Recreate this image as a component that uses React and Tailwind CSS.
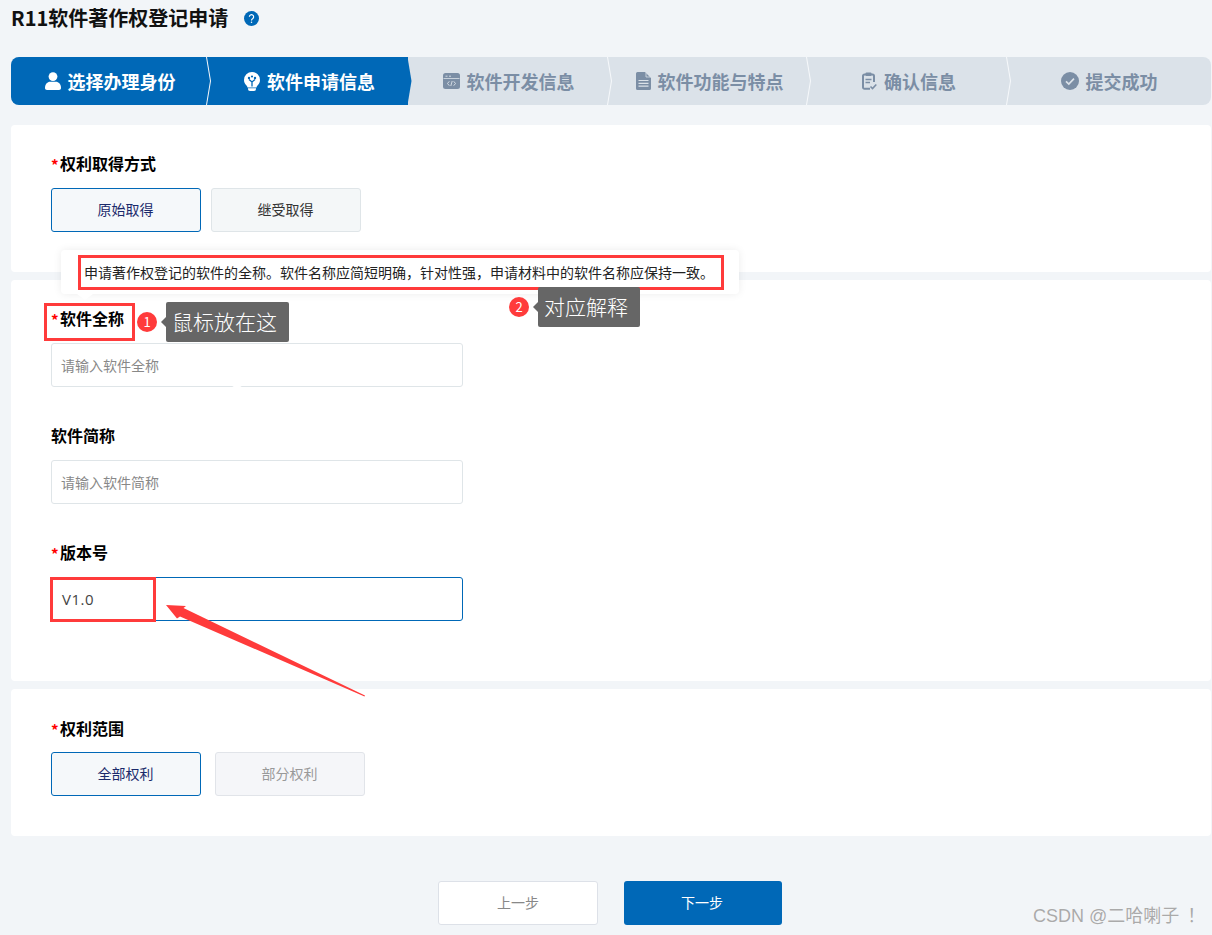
import React from 'react'

const FONT = "font-['Noto_Sans_CJK_SC','Noto_Sans',sans-serif]"

const UserIcon = () => (
  <svg viewBox="0 0 16 18" className="w-[16px] h-[18px]" fill="currentColor">
    <circle cx="8" cy="4.600" r="4.400" />
    <path d="M0 16c0-4 2.600-6.200 5-6.200h6c2.400 0 5 2.200 5 6.200 0 1.200-.8 2-2 2H2c-1.200 0-2-.8-2-2z" />
  </svg>
)

const BulbIcon = () => (
  <svg viewBox="0 0 16 19" className="w-[16px] h-[19px]" fill="currentColor">
    <path d="M8 0a8 8 0 0 0-8 8c0 2.400 1 4 2.300 5.300.8.8 1.200 1.500 1.200 2.200h9c0-.7.4-1.400 1.200-2.200C15 12 16 10.400 16 8a8 8 0 0 0-8-8z" />
    <path d="M4 16.300h8v.7a2 2 0 0 1-2 2H6a2 2 0 0 1-2-2z" />
    <circle cx="5" cy="6" r="1.200" fill="#0068b7" />
    <circle cx="11" cy="6" r="1.200" fill="#0068b7" />
    <circle cx="8" cy="4.500" r="1.100" fill="#0068b7" />
    <path d="M5 7.500 8 10l3-2.500M8 9.500v5" stroke="#0068b7" strokeWidth="1.300" fill="none" />
  </svg>
)

const CodeIcon = () => (
  <svg viewBox="0 0 17 16" className="w-[17px] h-[16px]">
    <rect width="17" height="16" rx="2.500" fill="currentColor" />
    <path d="M2.500 3.200h2M6 3.200h2" stroke="#dbe2e9" strokeWidth="0.900" />
    <path d="M0.500 5.500h16" stroke="#dbe2e9" strokeWidth="0.800" />
    <path d="M6.300 8.300 4.500 10.500l1.800 2.200M10.700 8.300l1.800 2.200-1.800 2.200M9.200 8l-1.400 5" stroke="#dbe2e9" strokeWidth="0.900" fill="none" />
  </svg>
)

const FileIcon = () => (
  <svg viewBox="0 0 15 18" className="w-[15px] h-[18px]">
    <path d="M1.500 0H9L15 6V16.500A1.500 1.500 0 0 1 13.500 18H1.500A1.500 1.500 0 0 1 0 16.500V1.500A1.500 1.500 0 0 1 1.500 0z" fill="currentColor" />
    <path d="M2.500 8.500h10M2.500 11.300h10M2.500 14.100h10" stroke="#dbe2e9" strokeWidth="1.200" />
    <path d="M10 0.500v4.500h4.500" fill="none" stroke="#dbe2e9" strokeWidth="0.800" />
  </svg>
)

const ClipboardIcon = () => (
  <svg viewBox="0 0 15 18" className="w-[15px] h-[18px]">
    <path
      d="M8 16.800H2.500A1.500 1.500 0 0 1 1 15.300V4A1.500 1.500 0 0 1 2.500 2.500h8A1.500 1.500 0 0 1 12 4v6"
      fill="none"
      stroke="currentColor"
      strokeWidth="2"
    />
    <rect x="3.500" y="0.500" width="6" height="3.500" rx="1" fill="currentColor" />
    <path d="M3.500 7.500h6M3.500 10.500h4.500" stroke="currentColor" strokeWidth="1.500" />
    <path d="M8.500 14.500l2 2 3.800-4" stroke="currentColor" strokeWidth="1.600" fill="none" />
  </svg>
)

const CheckIcon = () => (
  <svg viewBox="0 0 18 18" className="w-[18px] h-[18px]">
    <circle cx="9" cy="9" r="9" fill="currentColor" />
    <path d="M5 9.300l2.800 2.700L13 6.600" stroke="#dbe2e9" strokeWidth="1.700" fill="none" />
  </svg>
)

const steps = [
  { label: '选择办理身份', icon: UserIcon, active: true, width: 'w-[196px]', pad: 'pl-[2px]' },
  { label: '软件申请信息', icon: BulbIcon, active: true, width: 'w-[201px]', pad: 'pl-[4px]' },
  { label: '软件开发信息', icon: CodeIcon, active: false, width: 'w-[200px]', pad: 'pl-[1px]' },
  { label: '软件功能与特点', icon: FileIcon, active: false, width: 'w-[199px]', pad: 'pl-[4px]' },
  { label: '确认信息', icon: ClipboardIcon, active: false, width: 'w-[200px]', pad: 'pl-[4px]' },
  { label: '提交成功', icon: CheckIcon, active: false, width: 'flex-1', pad: 'pl-0' },
]

const Stepper = () => (
  <div className="flex h-12 mb-5 rounded-lg bg-[#dbe2e9]">
    {steps.map((step, i) => {
      const Icon = step.icon
      return (
        <div
          key={step.label}
          className={`relative flex items-center justify-center gap-[7px] ${step.width} ${step.pad} ${
            step.active ? 'bg-[#0068b7] text-white' : 'text-[#7b8ea5]'
          } ${i === 0 ? 'rounded-l-lg' : ''} ${i === steps.length - 1 ? 'rounded-r-lg' : ''}`}
        >
          <Icon />
          <span className="text-[18px] leading-none font-bold">{step.label}</span>
          {i < steps.length - 1 && (
            <svg viewBox="0 0 6 48" className="absolute left-full top-0 -ml-[1px] w-[6px] h-12 z-10">
              <path d="M0.500 0 4.500 24 0.500 48" fill={step.active ? '#0068b7' : '#dbe2e9'} stroke="none" />
              <path
                d="M0.500 0 4.500 24 0.500 48"
                fill="none"
                stroke={i === 1 ? 'none' : '#f7f9fb'}
                strokeWidth="1"
              />
            </svg>
          )}
        </div>
      )
    })}
  </div>
)

const Label = ({ children, required, className = '' }) => (
  <div className={`flex items-center h-6 pb-[2px] text-[16px] font-bold text-black ${className}`}>
    {required && <span className="w-[9px] text-[#f00] text-[15px] leading-none mt-[3px]">*</span>}
    {children}
  </div>
)

const Choice = ({ children, state }) => {
  const styles = {
    selected: 'border-[#0068b7] bg-[#f5f8fa] text-[#1b2a6b]',
    normal: 'border-[#dfe5e8] bg-[#f4f7f8] text-[#333]',
    disabled: 'border-[#e1e4e9] bg-[#f5f6f9] text-[#999]',
  }
  return (
    <button className={`h-11 w-[150px] pb-[2px] pr-[1px] rounded-[3px] border text-[14px] ${styles[state]}`}>
      {children}
    </button>
  )
}

const Field = ({ placeholder, value, focused }) => (
  <div
    className={`flex items-center w-[412px] h-11 rounded-[3px] border bg-white ${
      focused ? 'border-[#0068b7]' : 'border-[#dfe5e8]'
    } ${value ? "pl-[10px] text-[15px] text-[#444] font-['Open_Sans',sans-serif] tracking-[0.5px]" : 'pl-[9px] text-[14px] text-[#888]'}`}
  >
    {value || placeholder}
  </div>
)

const Badge = ({ n, className }) => (
  <div
    className={`absolute w-5 h-5 rounded-full bg-[#ff3b3b] text-white text-[13px] flex items-center justify-center ${className}`}
  >
    {n}
  </div>
)

const Tag = ({ children, className }) => (
  <div
    className={`absolute h-10 flex items-center pl-[6px] pb-[2px] rounded-[2px] bg-[#666] text-white text-[21px] font-light leading-none ${className}`}
  >
    <span className="absolute -left-[5px] top-1/2 -mt-[5px] w-0 h-0 border-y-[5px] border-y-transparent border-r-[5px] border-r-[#666]" />
    {children}
  </div>
)

export default function App() {
  return (
    <div className={`relative h-[935px] overflow-hidden bg-[#f2f5f8] pl-[11px] pr-[1px] ${FONT}`}>
      <div className="flex items-center h-9 mb-[21px] text-[20px] font-bold text-[#111]">
        R11软件著作权登记申请
        <svg viewBox="0 0 14 14" className="w-[15px] h-[15px] ml-[16px]">
          <circle cx="7" cy="7" r="7" fill="#0068b7" />
          <path
            d="M5 5.400a2 2 0 1 1 3 1.800c-.7.4-1 .8-1 1.600"
            stroke="#fff"
            strokeWidth="1.100"
            fill="none"
          />
          <circle cx="7" cy="10.500" r="0.700" fill="#fff" />
        </svg>
      </div>

      <Stepper />

      <section className="h-[147px] mb-2 rounded bg-white pl-10 pt-[27px]">
        <Label required className="mb-3">权利取得方式</Label>
        <div className="flex gap-[10px]">
          <Choice state="selected">原始取得</Choice>
          <Choice state="normal">继受取得</Choice>
        </div>
      </section>

      <section className="h-[401px] mb-2 rounded bg-white pl-10 pt-[27px]">
        <Label required className="mb-3">软件全称</Label>
        <Field placeholder="请输入软件全称" />
        <Label className="mt-[37px] mb-3">软件简称</Label>
        <Field placeholder="请输入软件简称" />
        <Label required className="mt-[37px] mb-3">版本号</Label>
        <Field value="V1.0" focused />
      </section>

      <section className="h-[147px] rounded bg-white pl-10 pt-[28px]">
        <Label required className="mb-[11px]">权利范围</Label>
        <div className="flex gap-[14px]">
          <Choice state="selected">全部权利</Choice>
          <Choice state="disabled">部分权利</Choice>
        </div>
      </section>

      <div className="flex justify-center gap-[26px] mt-[45px] pr-[2px]">
        <button className="w-40 h-11 pb-[2px] rounded-[3px] border border-[#dde1e8] bg-white text-[14px] text-[#888]">上一步</button>
        <button className="w-[158px] h-11 pb-[2px] pr-[2px] rounded-[3px] bg-[#0068b7] text-[14px] text-white">下一步</button>
      </div>

      {/* tooltip + annotations on top of the form */}
      <div className="absolute left-[61px] top-[250px] w-[678px] h-11 flex items-center pl-[23px] rounded bg-white text-[14px] leading-none text-[#222] shadow-[0_0_8px_rgba(0,0,0,0.08)]">
        申请著作权登记的软件的全称。软件名称应简短明确，针对性强，申请材料中的软件名称应保持一致。
        <span className="absolute left-[16px] top-full w-0 h-0 border-x-[8px] border-x-transparent border-t-[6px] border-t-white" />
      </div>
      <span className="absolute left-[229px] top-[384px] w-0 h-0 border-x-[8px] border-x-transparent border-t-[5px] border-t-white" />

      <div className="absolute left-[44px] top-[303px] w-[91px] h-[38px] border-[3px] border-[#ff3b3b]" />
      <div className="absolute left-[78px] top-[255px] w-[646px] h-[35px] border-[3px] border-[#ff3b3b]" />
      <div className="absolute left-[50px] top-[577px] w-[106px] h-[45px] border-[3px] border-[#ff3b3b]" />

      <Badge n="1" className="left-[137px] top-[312px]" />
      <Tag className="left-[166px] top-[302px] w-[123px]">鼠标放在这</Tag>
      <Badge n="2" className="left-[509px] top-[297px]" />
      <Tag className="left-[538px] top-[287px] w-[102px]">对应解释</Tag>

      <svg viewBox="0 0 1212 935" className="absolute inset-0 w-[1212px] h-[935px] pointer-events-none">
        <polygon points="166,605 186,606 183.500,608 365,695.500 364.500,696.500 180,616.500 177,618.500" fill="#ff3b3b" />
      </svg>

      <div className="absolute left-[1033px] top-[904px] text-[18px] leading-6 text-[#aaa] font-['Liberation_Sans','Noto_Sans_CJK_SC',sans-serif] [text-shadow:0_0_1px_#fff]">
        CSDN @二哈喇子<span className="ml-[8px]">！</span>
      </div>
    </div>
  )
}
